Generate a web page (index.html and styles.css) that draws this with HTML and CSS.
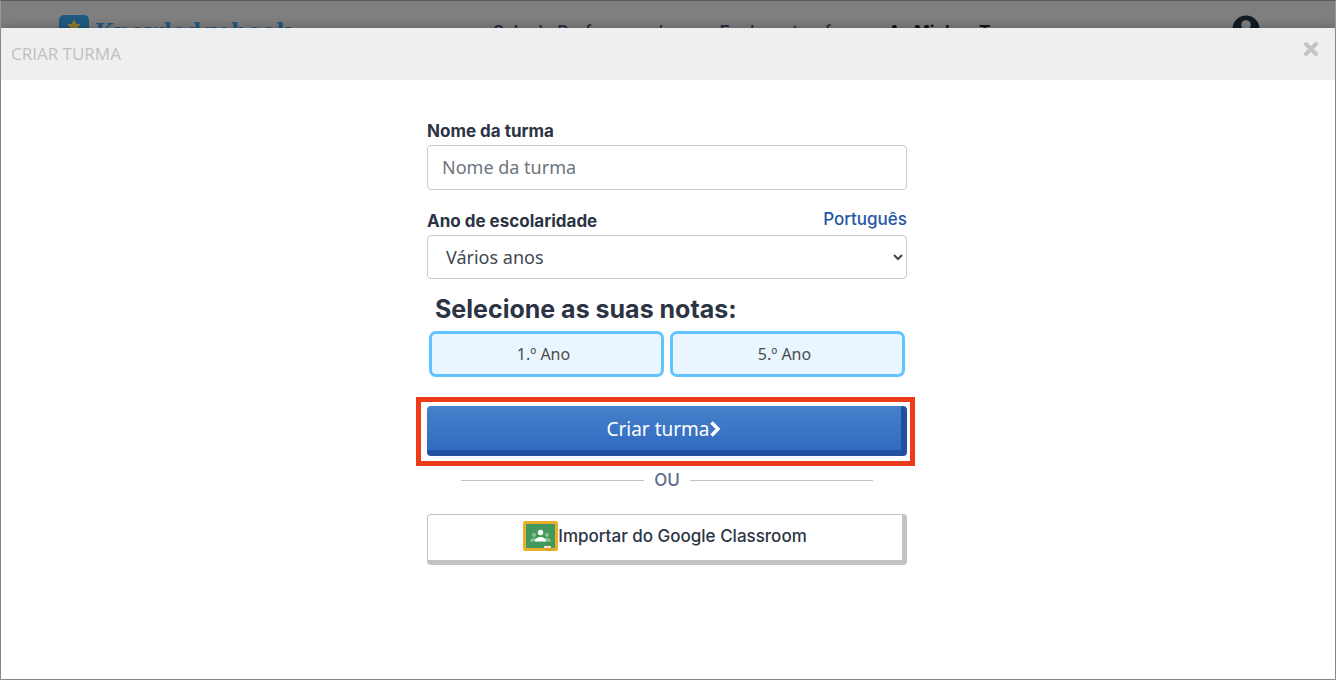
FILE: index.html
```html
<!DOCTYPE html>
<html lang="pt">
<head>
<meta charset="utf-8">
<meta name="viewport" content="width=device-width, initial-scale=1">
<title>Criar turma</title>
<link rel="stylesheet" href="styles.css">
</head>
<body>
<div class="page">
  <header class="topbar">
    <a class="brand" href="#">
      <svg class="brand-mark" viewBox="0 0 30 30" aria-hidden="true"><rect width="30" height="30" rx="5" fill="#1f5881"/><path d="M15 4.500l2.300 4.200 4.700.6-3.500 3.300 1 4.900-4.500-2.300-4.500 2.300 1-4.900L8 9.300l4.700-.6z" fill="#8f7d35"/></svg>
      <span>Knowledgehook</span>
    </a>
    <nav class="nav">
      <a href="#">Sala de Professores/as</a>
      <a href="#">Explorar tarefas</a>
      <a class="current" href="#">As Minhas Turmas</a>
    </nav>
    <button class="account" type="button" aria-label="Conta">
      <svg viewBox="0 0 28 28" aria-hidden="true"><circle cx="14" cy="14" r="13.500" fill="#111c24"/><circle cx="14" cy="10" r="4.800" fill="#7f7f7f"/><path d="M5 22c1-5 4-6 9-6s8 1 9 6c-5 5-13 5-18 0z" fill="#7f7f7f"/></svg>
    </button>
  </header>
  <main class="modal" role="dialog" aria-labelledby="modal-title">
    <div class="modal-head">
      <h1 class="modal-title" id="modal-title">CRIAR TURMA</h1>
      <button class="close" type="button" aria-label="Fechar">
        <svg viewBox="0 0 16 16" aria-hidden="true"><path d="M3 3l10 10M13 3L3 13" stroke="#c4c4c4" stroke-width="4" stroke-linecap="round"/></svg>
      </button>
    </div>
    <form class="form">
      <div class="label-row"><label for="name">Nome da turma</label></div>
      <input class="field" id="name" type="text" placeholder="Nome da turma">
      <div class="label-row second">
        <label for="grade">Ano de escolaridade</label>
        <a class="language" href="#">Português</a>
      </div>
      <select class="field select" id="grade"><option>Vários anos</option></select>
      <h2 class="subtitle">Selecione as suas notas:</h2>
      <div class="grades">
        <button class="grade" type="button">1.º Ano</button>
        <button class="grade" type="button">5.º Ano</button>
      </div>
      <div class="highlight">
        <button class="create" type="button">Criar turma<svg class="chevron" viewBox="0 0 12 18" aria-hidden="true"><path d="M1.500 2.500L8 9l-6.500 6.500" fill="none" stroke="#fff" stroke-width="3.400"/></svg></button>
      </div>
      <div class="divider"><span>OU</span></div>
      <button class="import" type="button">
        <svg class="classroom" viewBox="0 0 35 30" aria-hidden="true"><rect width="35" height="30" rx="2" fill="#eab02c"/><rect x="3" y="3" width="29" height="24" fill="#43995b"/><g fill="#87c598"><circle cx="11" cy="14" r="2"/><circle cx="24" cy="14" r="2"/><path d="M7 20.500c0-2.500 2-3.500 4-3.500s3 1 3 3.500zM21 20.500c0-2.500 1-3.500 3-3.500s4 1 4 3.500z"/></g><circle cx="17.500" cy="11.500" r="2.700" fill="#fff"/><path d="M12 20.500c0-3 2.500-4.500 5.500-4.500s5.500 1.500 5.500 4.500z" fill="#fff"/><path d="M21 25h7v2h-7z" fill="#f1e5cf"/><path d="M21 27h7l3 3h-7z" fill="#dda12a"/></svg>
        <span>Importar do Google Classroom</span>
      </button>
    </form>
  </main>
</div>
</body>
</html>
```
FILE: styles.css
```css
* { box-sizing: border-box; }
body {
  margin: 0;
  font-family: Inter, "Liberation Sans", sans-serif;
  color: #2c3444;
}
button { font: inherit; color: inherit; cursor: pointer; }
a { text-decoration: none; }
h1, h2 { margin: 0; }

.page {
  position: relative;
  display: flex;
  min-height: 100vh;
  border: 1px solid #9a9a9a;
  border-top-color: #5c5c5c;
  background: #7f7f7f;
}
.topbar {
  position: absolute;
  inset: 0 0 auto;
  display: flex;
  align-items: flex-start;
  padding: 14px 75px 0 58px;
}
.brand {
  display: flex;
  gap: 6px;
  width: 434px;
  color: #1f5881;
  font: bold 22px/32px "DejaVu Serif", serif;
}
.brand-mark { width: 30px; height: 30px; }
.nav {
  display: flex;
  flex: 1;
  gap: 38px;
  padding-top: 5px;
  font-size: 17px;
  line-height: 24px;
  font-weight: 600;
}
.nav a { color: #2a3145; }
.nav .current { color: #11161e; font-weight: 700; }
.account { width: 28px; padding: 0; border: 0; background: none; }
.account svg { display: block; }

.modal {
  position: relative;
  flex: 1;
  margin-top: 27px;
  background: #fff;
  box-shadow: 0 0 10px rgba(0, 0, 0, .3);
}
.modal-head {
  display: flex;
  justify-content: space-between;
  align-items: flex-start;
  padding: 12px 16px 12px 10px;
  background: #efefef;
}
.modal-title {
  color: #bfbfbf;
  font: 400 17px/28px "Open Sans", "Noto Sans", sans-serif;
}
.close { padding: 1px 0 0; border: 0; background: none; }
.close svg { display: block; width: 16px; height: 16px; }

.form {
  display: flex;
  flex-direction: column;
  max-width: 482px;
  margin: 0 auto;
  padding: 39px 2px 40px 0;
}
.label-row {
  display: flex;
  justify-content: space-between;
  padding-bottom: 2px;
  font-size: 17px;
  line-height: 24px;
  font-weight: 700;
}
.second { margin-top: 19px; }
.language { color: #2456a6; font-weight: 500; line-height: 20px; }
.field {
  width: 100%;
  height: 45px;
  padding: 0 14px 2px;
  border: 1px solid #c8cad2;
  border-radius: 4px;
  background: #fff;
  color: #42474f;
  font: 18px/24px "Noto Sans", sans-serif;
}
.field::placeholder { color: #6c757d; opacity: 1; }
.select { height: 44px; padding: 0 0 0 14px; }
.subtitle {
  padding: 14px 8px 5px;
  font-size: 25px;
  line-height: 33px;
  font-weight: 700;
}
.grades {
  display: grid;
  grid-template-columns: 1fr 1fr;
  gap: 6px;
  padding: 0 2px;
}
.grade {
  height: 46px;
  padding: 0 6px 0 0;
  border: 3px solid #61c3ff;
  border-radius: 7px;
  background: #e9f6ff;
  color: #4b4b4b;
  font: 16px/24px "Noto Sans", sans-serif;
}
.highlight {
  margin: 20px -8px 0 -11px;
  padding: 4px 3px 5px 6px;
  border: 5px solid #ec3b18;
}
.create {
  display: flex;
  justify-content: center;
  align-items: center;
  width: 100%;
  height: 50px;
  padding: 2px 0 0;
  border: 0 solid #20509f;
  border-width: 0 6px 6px 0;
  border-radius: 4px;
  background: linear-gradient(#4681ca, #316bc0) padding-box;
  color: #fff;
  font: 19px/24px "Noto Sans", sans-serif;
}
.chevron { width: 12px; height: 18px; }
.divider {
  display: flex;
  align-items: center;
  gap: 10px;
  margin: 2px 34px 22px;
  color: #5d6b8d;
  font-size: 17px;
  line-height: 24px;
  font-weight: 500;
}
.divider::before, .divider::after {
  content: "";
  flex: 1;
  border-top: 1px solid #c3c3c3;
}
.import {
  display: flex;
  justify-content: center;
  align-items: center;
  height: 51px;
  padding: 0 0 3px;
  border: solid #c3c3c3;
  border-width: 1px 5px 5px 1px;
  border-radius: 4px;
  background: #fff;
  font-size: 17px;
  line-height: 24px;
  font-weight: 500;
}
.classroom { width: 35px; height: 30px; }
```
